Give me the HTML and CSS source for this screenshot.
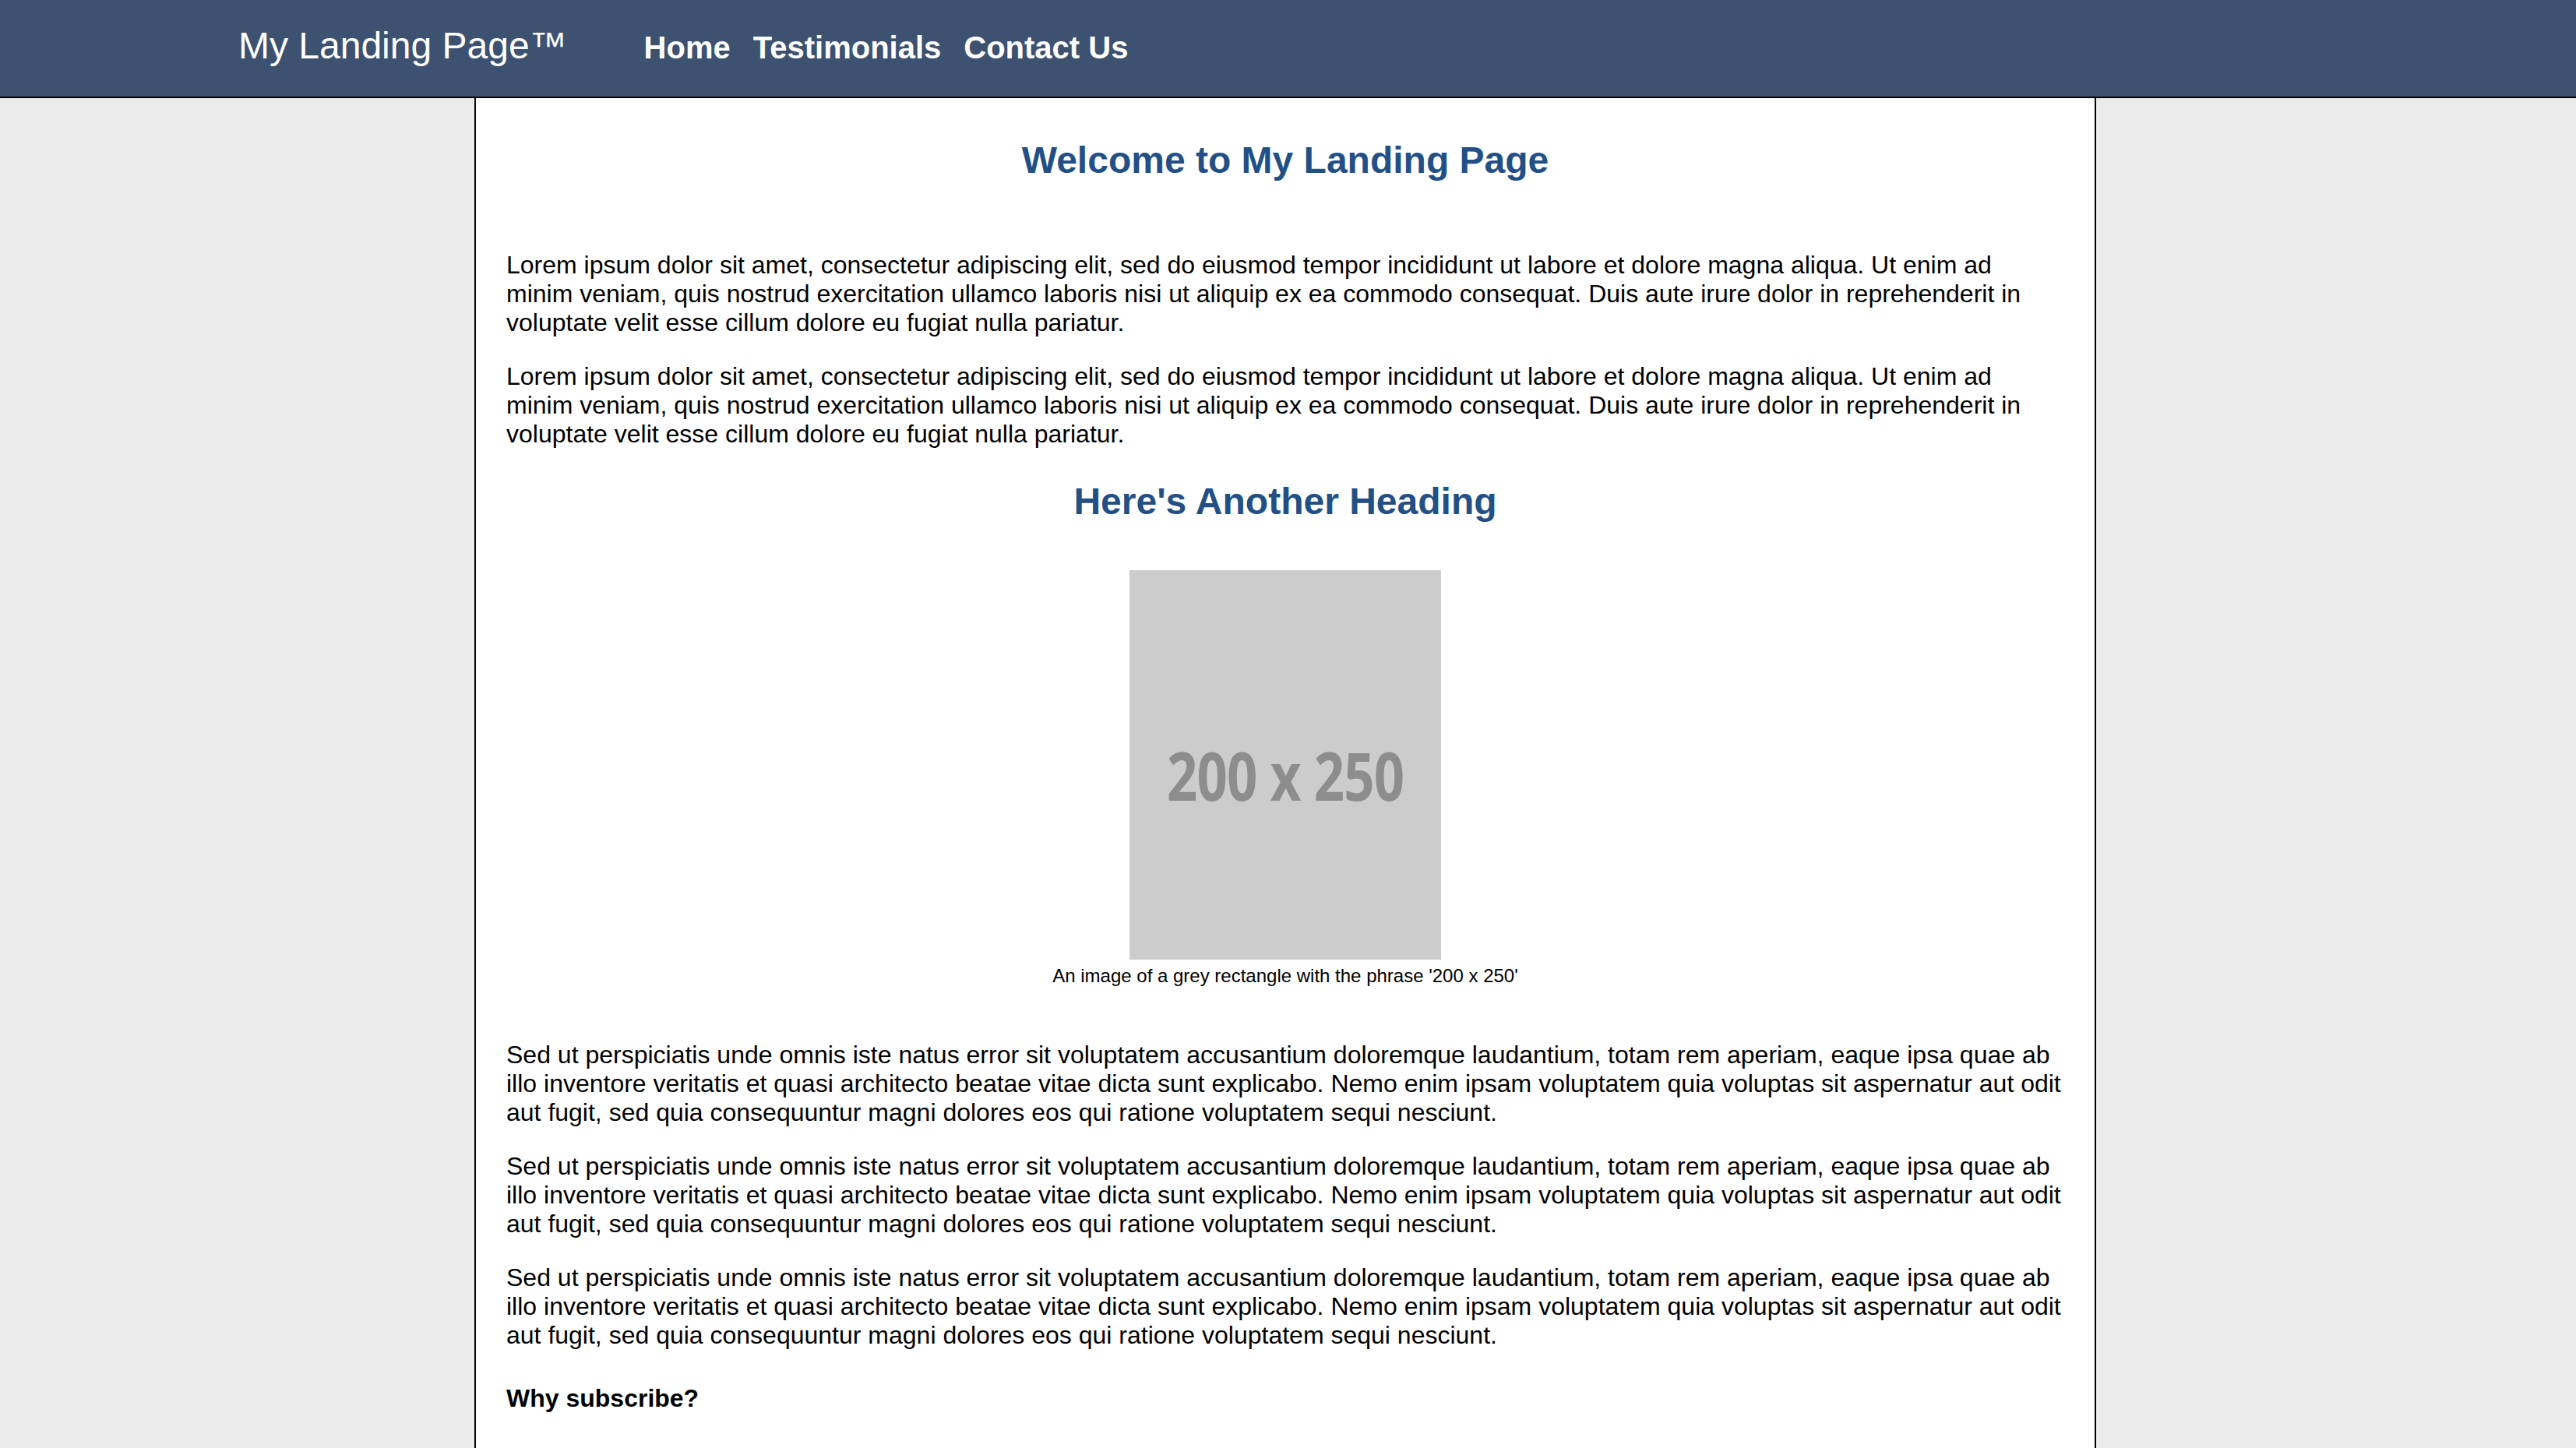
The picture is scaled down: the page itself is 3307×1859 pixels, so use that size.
FILE: index.html
```html
<!DOCTYPE html>
<html lang="en">
<head>
<meta charset="utf-8">
<title>My Landing Page</title>
<link rel="stylesheet" href="styles.css">
</head>
<body>
<header class="site-header">
  <div class="brand">My Landing Page™</div>
  <nav class="nav">
    <a class="nav-link" href="#">Home</a>
    <a class="nav-link" href="#">Testimonials</a>
    <a class="nav-link" href="#">Contact Us</a>
  </nav>
</header>
<main class="page">
  <section class="content">
    <h1 class="title">Welcome to My Landing Page</h1>
    <p class="text">Lorem ipsum dolor sit amet, consectetur adipiscing elit, sed do eiusmod tempor incididunt ut labore et dolore magna aliqua. Ut enim ad minim veniam, quis nostrud exercitation ullamco laboris nisi ut aliquip ex ea commodo consequat. Duis aute irure dolor in reprehenderit in voluptate velit esse cillum dolore eu fugiat nulla pariatur.</p>
    <p class="text">Lorem ipsum dolor sit amet, consectetur adipiscing elit, sed do eiusmod tempor incididunt ut labore et dolore magna aliqua. Ut enim ad minim veniam, quis nostrud exercitation ullamco laboris nisi ut aliquip ex ea commodo consequat. Duis aute irure dolor in reprehenderit in voluptate velit esse cillum dolore eu fugiat nulla pariatur.</p>
    <h2 class="subtitle">Here's Another Heading</h2>
    <figure class="figure">
      <div class="placeholder"><span class="placeholder-label">200 x 250</span></div>
      <figcaption class="caption">An image of a grey rectangle with the phrase '200 x 250'</figcaption>
    </figure>
    <p class="text">Sed ut perspiciatis unde omnis iste natus error sit voluptatem accusantium doloremque laudantium, totam rem aperiam, eaque ipsa quae ab illo inventore veritatis et quasi architecto beatae vitae dicta sunt explicabo. Nemo enim ipsam voluptatem quia voluptas sit aspernatur aut odit aut fugit, sed quia consequuntur magni dolores eos qui ratione voluptatem sequi nesciunt.</p>
    <p class="text">Sed ut perspiciatis unde omnis iste natus error sit voluptatem accusantium doloremque laudantium, totam rem aperiam, eaque ipsa quae ab illo inventore veritatis et quasi architecto beatae vitae dicta sunt explicabo. Nemo enim ipsam voluptatem quia voluptas sit aspernatur aut odit aut fugit, sed quia consequuntur magni dolores eos qui ratione voluptatem sequi nesciunt.</p>
    <p class="text">Sed ut perspiciatis unde omnis iste natus error sit voluptatem accusantium doloremque laudantium, totam rem aperiam, eaque ipsa quae ab illo inventore veritatis et quasi architecto beatae vitae dicta sunt explicabo. Nemo enim ipsam voluptatem quia voluptas sit aspernatur aut odit aut fugit, sed quia consequuntur magni dolores eos qui ratione voluptatem sequi nesciunt.</p>
    <h4 class="minor">Why subscribe?</h4>
  </section>
</main>
</body>
</html>
```

FILE: styles.css
```css
html, body {
  margin: 0;
  padding: 0;
}

body {
  background: #ebebeb;
  font-family: "Liberation Sans", Arial, Helvetica, sans-serif;
  color: #000;
}

.site-header {
  display: flex;
  align-items: baseline;
  box-sizing: border-box;
  height: 126px;
  padding: 31px 0 0 306px;
  background: #3d5170;
  border-bottom: 2px solid #000;
}

.brand {
  font-size: 48px;
  font-weight: 400;
  color: #fff;
}

.nav {
  display: flex;
  align-items: baseline;
  gap: 29px;
  margin-left: 99px;
}

.nav-link {
  font-size: 40px;
  font-weight: 700;
  color: #fff;
  text-decoration: none;
}

.page {
  display: block;
  box-sizing: border-box;
  width: 2082px;
  margin-left: calc(50% - 1044.5px);
  min-height: 1900px;
  padding: 12px 39px 40px;
  background: #fff;
  border-left: 2px solid #000;
  border-right: 2px solid #000;
}

.content {
  display: block;
}

.title {
  margin: 39.5px 0 89.5px;
  font-size: 48px;
  font-weight: 700;
  color: #225086;
  text-align: center;
}

.text {
  margin: 32px 0;
  font-size: 32px;
}

.subtitle {
  margin: 40px 0 61px;
  font-size: 48px;
  font-weight: 700;
  color: #225086;
  text-align: center;
}

.figure {
  margin: 0 0 69px;
  display: flex;
  flex-direction: column;
  align-items: center;
}

.placeholder {
  width: 400px;
  height: 500px;
  background: #cccccc;
  display: flex;
  align-items: center;
  justify-content: center;
  box-sizing: border-box;
  padding-top: 25px;
}

.placeholder-label {
  display: inline-block;
  font-family: "Open Sans", "Noto Sans", sans-serif;
  font-weight: 700;
  font-size: 86px;
  letter-spacing: -1px;
  color: #8d8d8d;
  white-space: nowrap;
  transform: scaleX(0.8);
}

.caption {
  margin-top: 7px;
  font-size: 24px;
  text-align: center;
}

.minor {
  margin: 43.5px 0;
  font-size: 32px;
  font-weight: 700;
}
```
